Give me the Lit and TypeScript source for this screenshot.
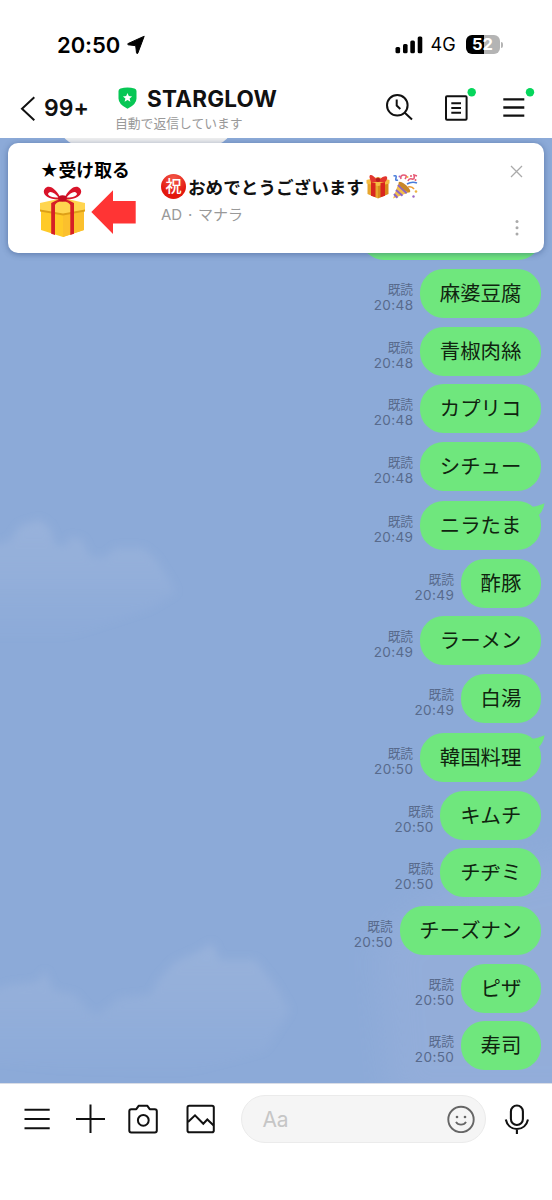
import { LitElement, html, css, svg } from "lit";
import { customElement, property } from "lit/decorators.js";
import { classMap } from "lit/directives/class-map.js";

interface Message {
  text: string;
  time: string;
  first?: boolean;
}

const MESSAGES: Message[] = [
  { text: "麻婆豆腐", time: "20:48" },
  { text: "青椒肉絲", time: "20:48" },
  { text: "カプリコ", time: "20:48" },
  { text: "シチュー", time: "20:48" },
  { text: "ニラたま", time: "20:49", first: true },
  { text: "酢豚", time: "20:49" },
  { text: "ラーメン", time: "20:49" },
  { text: "白湯", time: "20:49" },
  { text: "韓国料理", time: "20:50", first: true },
  { text: "キムチ", time: "20:50" },
  { text: "チヂミ", time: "20:50" },
  { text: "チーズナン", time: "20:50" },
  { text: "ピザ", time: "20:50" },
  { text: "寿司", time: "20:50" },
];

@customElement("status-bar")
class StatusBar extends LitElement {
  static styles = css`
    :host { display: flex; height: 76px; align-items: flex-start; padding: 33px 49px 0 57px; box-sizing: border-box; color: #000; }
    .time { font-size: 22px; font-weight: 600; line-height: 24px; letter-spacing: -0.05px; width: 64px; }
    .arrow { margin: 2px 0 0 6px; }
    .spacer { flex: 1; }
    .signal { margin-top: 3px; }
    .net { font-size: 18px; line-height: 24px; margin: 0 0 0 8px; width: 26px; letter-spacing: 0; }
    .battery { margin: 2px 0 0 9px; width: 34px; height: 19px; border-radius: 6px; background: linear-gradient(90deg, #000 0 18px, #b4b4b4 18px); color: #fff; font-size: 16.5px; font-weight: 700; line-height: 19px; text-align: center; }
    .nub { margin: 9px 0 0 1.5px; width: 2px; height: 6px; border-radius: 0 2px 2px 0; background: #b4b4b4; }
  `;
  render() {
    return html`
      <div class="time">20:50</div>
      <svg class="arrow" width="19" height="20" viewBox="0 0 19 20"><path d="M17.2 1.2 10.8 18.2Q10 19.3 9.5 17.8L8.7 10.7 1.3 9.8Q-.1 9.2 1.2 8.5L16.8 1.4Z" fill="#000" stroke="#000" stroke-width="1" stroke-linejoin="round" /></svg>
      <div class="spacer"></div>
      <svg class="signal" width="28" height="18" viewBox="0 0 28 18"><rect x=".5" y="11" width="4.6" height="6.3" rx="1.5" /><rect x="8" y="8" width="4.6" height="9.3" rx="1.5" /><rect x="15.3" y="4.5" width="4.6" height="12.8" rx="1.5" /><rect x="22.7" y=".6" width="4.6" height="16.7" rx="1.5" /></svg>
      <div class="net">4G</div>
      <div class="battery">52</div>
      <div class="nub"></div>
    `;
  }
}

@customElement("chat-header")
class ChatHeader extends LitElement {
  static styles = css`
    :host { display: flex; height: 62px; padding: 0 16px 0 20px; align-items: flex-start; color: #111; }
    .back { margin-top: 20px; }
    .count { margin: 19px 0 0 8px; width: 71px; font-size: 23px; line-height: 26px; font-weight: 600; letter-spacing: 0.1px; }
    .title-block { flex: 1; }
    .title-row { display: flex; align-items: center; gap: 10px; margin-top: 8px; height: 28px; padding-left: 3px; }
    .name { font-size: 22.5px; line-height: 30px; margin-top: 1px; font-weight: 700; letter-spacing: 0.2px; }
    .sub { font-size: 12.8px; line-height: 18px; color: #999; margin-top: 3px; white-space: nowrap; }
    .actions { display: flex; gap: 27px; padding-top: 11px; }
  `;
  render() {
    return html`
      <svg class="back" width="16" height="26" viewBox="0 0 16 26"><path d="M14.3 1.2 2 12.7 14.3 24.2" fill="none" stroke="#111" stroke-width="2" /></svg>
      <div class="count">99+</div>
      <div class="title-block">
        <div class="title-row">
          <svg width="19" height="22" viewBox="0 0 19 22"><path d="M2.5 1.5Q9.5-.3 16.5 1.5 18.5 2 18.5 4V11.5Q18.5 17.5 9.5 21.7.5 17.5.5 11.5V4Q.5 2 2.5 1.5Z" fill="#07c755" /><path d="M9.5 6.1 10.8 9.1 14.1 9.4 11.6 11.5 12.4 14.7 9.5 13 6.6 14.7 7.4 11.5 4.9 9.4 8.2 9.1Z" fill="#fff" /></svg>
          <div class="name">STARGLOW</div>
        </div>
        <div class="sub">自動で返信しています</div>
      </div>
      <div class="actions">
        <svg width="32" height="36" viewBox="0 0 32 36"><g fill="none" stroke="#111" stroke-width="2"><circle cx="12.3" cy="18.3" r="10.3" /><path d="M19.5 25.5 27 32.5M11.7 12.5V18.5L15.3 22" /></g></svg>
        <svg width="32" height="36" viewBox="0 0 32 36"><g fill="none" stroke="#111" stroke-width="2"><rect x="2" y="9.3" width="20.6" height="23.4" rx="1" /><path d="M7.3 16.3H17M7.3 21H17M7.3 25.7H17" /></g><circle cx="27.7" cy="5.3" r="4.2" fill="#06d65c" /></svg>
        <svg width="33" height="36" viewBox="0 0 33 36"><path d="M.3 12.4H21.3M.3 20.5H21.3M.3 28.7H21.3" stroke="#111" stroke-width="2.3" /><circle cx="27" cy="5.3" r="4.2" fill="#06d65c" /></svg>
      </div>
    `;
  }
}

@customElement("ad-card")
class AdCard extends LitElement {
  static styles = css`
    :host { display: flex; box-sizing: border-box; background: #fff; border-radius: 10px; padding: 0 20px 0 30px; box-shadow: 0 1px 6px rgba(30, 60, 110, 0.45); color: #111; }
    .art { width: 123px; padding-top: 16px; }
    .cta { font-size: 17.8px; line-height: 24px; font-weight: 700; padding-left: 2px; color: #000; white-space: nowrap; }
    .pictures { display: flex; gap: 3px; margin-top: 3px; align-items: center; }
    .copy { flex: 1; padding-top: 29px; }
    .headline { display: flex; align-items: center; height: 28px; font-size: 17.6px; font-weight: 700; white-space: nowrap; }
    .seal { width: 25px; height: 25px; border-radius: 50%; background: radial-gradient(circle at 50% 20%, #f35a4c, #e3170d 65%); color: #fff; font-size: 16px; font-weight: 500; line-height: 24px; text-align: center; margin-right: 2px; }
    .emoji { margin-left: 2px; }
    .by { font-size: 15px; line-height: 22px; color: #999; margin-top: 4px; }
    .dot { margin: 0 1.5px; }
    .side { width: 15px; display: flex; flex-direction: column; align-items: center; padding-top: 22px; gap: 41px; }
  `;
  render() {
    return html`
      <div class="art">
        <div class="cta">★受け取る</div>
        <div class="pictures">
          <svg width="50" height="52" viewBox="0 0 50 52">
            <path d="M3 22H46V44L25 51 3 44Z" fill="#ffca28" /><path d="M25 26V51L46 44V22Z" fill="#fbc02d" />
            <path d="M2 17 25 12 47 17V24L25 28 2 24Z" fill="#ffd54f" /><path d="M2 23.5 25 27.5 47 23.5V25.5L25 29.5 2 25.5Z" fill="#dda018" />
            <path d="M13.2 17Q18 14 23 13L24 15Q18 16 17 19V49L13.2 47.8ZM36 17Q31 14 26 13L25 15Q31 16 32.3 19V49L36 47.8Z" fill="#d61f26" />
            <path fill-rule="evenodd" d="M23 13.5C19 3 11-2 7 2.5S9 14.5 23 13.5ZM20.5 11.5C17 7 12.5 4.5 10.5 7S14 11.8 20.5 11.5ZM26 13.5C30 3 38-2 42 2.5S40 14.5 26 13.5ZM28.5 11.5C32 7 36.5 4.5 38.5 7S35 11.8 28.5 11.5Z" fill="#d9142a" />
            <ellipse cx="24.5" cy="12.5" rx="4.3" ry="3.3" fill="#c50c20" />
          </svg>
          <svg width="45" height="44" viewBox="0 0 45 44"><path d="M.3 22 22 .3V11H44.7V33.5H22V44Z" fill="#ff3434" /></svg>
        </div>
      </div>
      <div class="copy">
        <div class="headline">
          <span class="seal">祝</span><span>おめでとうございます</span>
          <svg class="emoji" width="24" height="25" viewBox="0 0 24 25"><path d="M1.5 8 12 10V24.5L1.5 20Z" fill="#e7a62e" /><path d="M12 10 22.5 8V20L12 24.5Z" fill="#d98a1b" /><path d="M.5 6 12 3 23.5 6V9.5L12 12 .5 9.5Z" fill="#f5bd42" /><path d="M5 8 9.5 9V23.3L5 21.7ZM14.5 9 19 8V21.7L14.5 23.3Z" fill="#d9251d" /><path d="M11 6C6-1 2 0 4 5L5 8 12 8 19 8C24 3 20-1 13 6Z" fill="#e2352e" /><circle cx="12" cy="5.8" r="2.2" fill="#b81f1c" /></svg>
          <svg class="emoji" width="26" height="25" viewBox="0 0 26 25"><path d="M7 8 18 18 1 24.5Z" fill="#f2bd4b" /><path d="M6 11 14.7 19.3M4 16 10.5 21.7M2 20 5.5 23.7" stroke="#8c63c4" stroke-width="2" /><ellipse cx="12.5" cy="13" rx="7.5" ry="2.5" transform="rotate(42 12.5 13)" fill="#c8872a" /><g fill="none" stroke-width="1.6"><path d="M1.5 2Q5 .8 4 4T6 6M15 10Q20 7 25 9" stroke="#497cdb" /><path d="M9 5Q8 1 12 1T13 5M16 7Q17 4 20 5T22 1L25 2" stroke="#e75a76" /><path d="M16 13Q20 12 22 15" stroke="#f09d35" /></g><g fill="#e0586e"><circle cx="23.5" cy="6" r="1" /><circle cx="19" cy="2" r="1" /></g><g fill="#9d68c8"><circle cx="21.5" cy="22.5" r="1.2" /><circle cx="7.5" cy="2.5" r="1" /></g><g fill="#eeb341"><circle cx="24" cy="17.5" r="1.3" /><circle cx="15.5" cy="3" r="1" /></g></svg>
        </div>
        <div class="by">AD <span class="dot">·</span> マナラ</div>
      </div>
      <div class="side">
        <svg width="13" height="13" viewBox="0 0 13 13"><path d="M1 1 12 12M12 1 1 12" stroke="#aaa" stroke-width="1.3" /></svg>
        <svg width="5" height="17" viewBox="0 0 5 17" fill="#aaa"><circle cx="3" cy="2.5" r="1.5" /><circle cx="3" cy="8.7" r="1.5" /><circle cx="3" cy="14.9" r="1.5" /></svg>
      </div>
    `;
  }
}

@customElement("chat-message")
class ChatMessage extends LitElement {
  @property({ attribute: false }) message!: Message;
  static styles = css`
    :host { display: flex; justify-content: flex-end; align-items: flex-end; gap: 7px; }
    .meta { text-align: right; color: #586a8c; padding-bottom: 5px; }
    .read { font-size: 12.7px; line-height: 15px; }
    .stamp { font-size: 13.6px; line-height: 16px; letter-spacing: 0.35px; margin-right: -0.35px; }
    .bubble { position: relative; box-sizing: border-box; height: 49px; padding: 0 19.7px; border-radius: 23.5px; background: #6fe77d; color: #10240f; font-size: 20.4px; line-height: 50px; white-space: nowrap; font-kerning: none; }
    .tail { position: absolute; right: -4px; top: 0; }
    .first { margin-top: 1.2px; }
  `;
  render() {
    const m = this.message;
    return html`
      <div class="meta"><div class="read">既読</div><div class="stamp">${m.time}</div></div>
      <div class=${classMap({ bubble: true, first: !!m.first })}>
        ${m.text}
        ${m.first ? html`<svg class="tail" width="20" height="20" viewBox="0 0 20 20"><path d="M4 6Q12 6 19.5 2.3 18.5 9.5 13.5 14.5Z" fill="#6fe77d" /></svg>` : ""}
      </div>
    `;
  }
}

@customElement("chat-composer")
class ChatComposer extends LitElement {
  static styles = css`
    :host { display: flex; height: 117px; box-sizing: border-box; background: #fff; border-top: 1px solid #d9dde6; padding: 11px 23.5px 0 23px; align-items: flex-start; }
    .icon { margin-top: 9px; }
    .menu { margin-right: 24px; }
    .plus { margin-right: 23.3px; }
    .camera { margin-right: 27.7px; }
    .picture { margin-right: 26.5px; }
    .field { flex: 1; display: flex; align-items: center; justify-content: space-between; box-sizing: border-box; height: 48px; border: 1px solid #ebebeb; border-radius: 24px; background: #f5f5f5; padding: 0 10px 0 20px; margin-right: 17.5px; }
    .hint { font-size: 21px; color: #c6c6c6; letter-spacing: -0.3px; margin-top: 1px; }
  `;
  render() {
    return html`
      <svg class="icon menu" width="28" height="30" viewBox="0 0 28 30"><path d="M1.5 5.7H26.7M1.5 15H26.7M1.5 24.3H26.7" stroke="#111" stroke-width="2" /></svg>
      <svg class="icon plus" width="30" height="30" viewBox="0 0 30 30"><path d="M1 15H30M15.5.5V29" stroke="#111" stroke-width="2" /></svg>
      <svg class="icon camera" width="30" height="30" viewBox="0 0 30 30"><g fill="none" stroke="#111" stroke-width="2" stroke-linejoin="round"><path d="M3.3 5.2H8.3L10.8 1.7H19.2L21.7 5.2H26.8Q28.8 5.2 28.8 7.2V26.5Q28.8 28.5 26.8 28.5H3.3Q1.3 28.5 1.3 26.5V7.2Q1.3 5.2 3.3 5.2Z" /><circle cx="15.3" cy="16.3" r="5.4" /></g></svg>
      <svg class="icon picture" width="29" height="30" viewBox="0 0 29 30"><g fill="none" stroke="#111" stroke-width="2"><rect x="1.5" y="1.8" width="26.3" height="26.4" rx="1.8" /><path d="M2 18 9 11.3 17.3 19.7 21.3 15.5 27.7 21.5" /></g></svg>
      <div class="field">
        <span class="hint">Aa</span>
        <svg width="28" height="28" viewBox="0 0 28 28"><g fill="none" stroke="#666" stroke-width="1.9"><circle cx="14" cy="14.5" r="12.7" /><path d="M9 16.9Q10.5 19.7 14 19.7T19 16.9" stroke-width="1.8" /></g><circle cx="10" cy="12" r="1.3" fill="#666" /><circle cx="18" cy="12" r="1.3" fill="#666" /></svg>
      </div>
      <svg class="icon" width="25" height="31" viewBox="0 0 25 31"><g fill="none" stroke="#111" stroke-width="2.1"><rect x="6.9" y="1.5" width="12" height="19.5" rx="6" /><path d="M1.8 15.5C3 21 7 25 12.9 25S22.8 21 24 15.5M12.9 25V30" /></g></svg>
    `;
  }
}

@customElement("app-root")
class AppRoot extends LitElement {
  static styles = css`
    :host { display: flex; flex-direction: column; width: 552px; height: 1200px; overflow: hidden; background: #fff; font-family: Inter, "Noto Sans CJK JP", sans-serif; }
    .chat { position: relative; flex: 1; min-height: 0; overflow: hidden; background: #8caad8; display: flex; flex-direction: column; justify-content: flex-end; gap: 8.7px; box-sizing: border-box; padding: 0 11px 12.7px 0; }
    .chat > chat-message { position: relative; flex: none; }
    .sky { position: absolute; left: 0; top: 0; }
    .scrolled { position: relative; flex: none; align-self: flex-end; width: 180px; height: 49px; border-radius: 23px; background: #6fe77d; }
    .incoming { position: absolute; left: 59px; top: -41px; width: 174px; height: 49px; border-radius: 23px; background: #efefef; }
    .ad { position: absolute; left: 8px; top: 5px; width: 536px; height: 110px; }
  `;
  render() {
    return html`
      <status-bar></status-bar>
      <chat-header></chat-header>
      <div class="chat">
        <svg class="sky" width="552" height="945" viewBox="0 138 552 945">
          <defs>
            <filter id="soft" x="-20%" y="-20%" width="140%" height="140%"><feGaussianBlur stdDeviation="4" /></filter>
            <filter id="haze" x="-40%" y="-40%" width="180%" height="180%"><feGaussianBlur stdDeviation="18" /></filter>
            <linearGradient id="fade" x1="0" y1="0" x2="0" y2="1"><stop offset="0" stop-color="#a9bddf" stop-opacity=".42" /><stop offset=".35" stop-color="#a9bddf" stop-opacity=".3" /><stop offset="1" stop-color="#a8bfe6" stop-opacity="0" /></linearGradient>
          </defs>
          ${svg`<g fill="url(#fade)" filter="url(#soft)">
            <path d="M-20 548 10 541 20 526 40 520 50 528 55 545 67 546 70 537 82 540 90 556 104 558 116 548 142 548 155 558 168 578 176 592 150 608 110 622 60 640-20 640Z" />
            <path d="M-20 995 10 985 38 982 45 971 53 990 75 995 88 1010 98 1015 120 998 150 995 160 978 175 962 200 951 212 943 220 960 255 960 275 985 290 1010 265 1050 180 1075 60 1070-20 1060Z" />
          </g>
          <path d="M375 940 430 900 480 875 600 850V1110H390Z" fill="#a3b5de" opacity=".3" filter="url(#haze)" />`}
        </svg>
        <div class="incoming"></div>
        <div class="scrolled"></div>
        ${MESSAGES.map((m) => html`<chat-message .message=${m}></chat-message>`)}
        <ad-card class="ad"></ad-card>
      </div>
      <chat-composer></chat-composer>
    `;
  }
}
